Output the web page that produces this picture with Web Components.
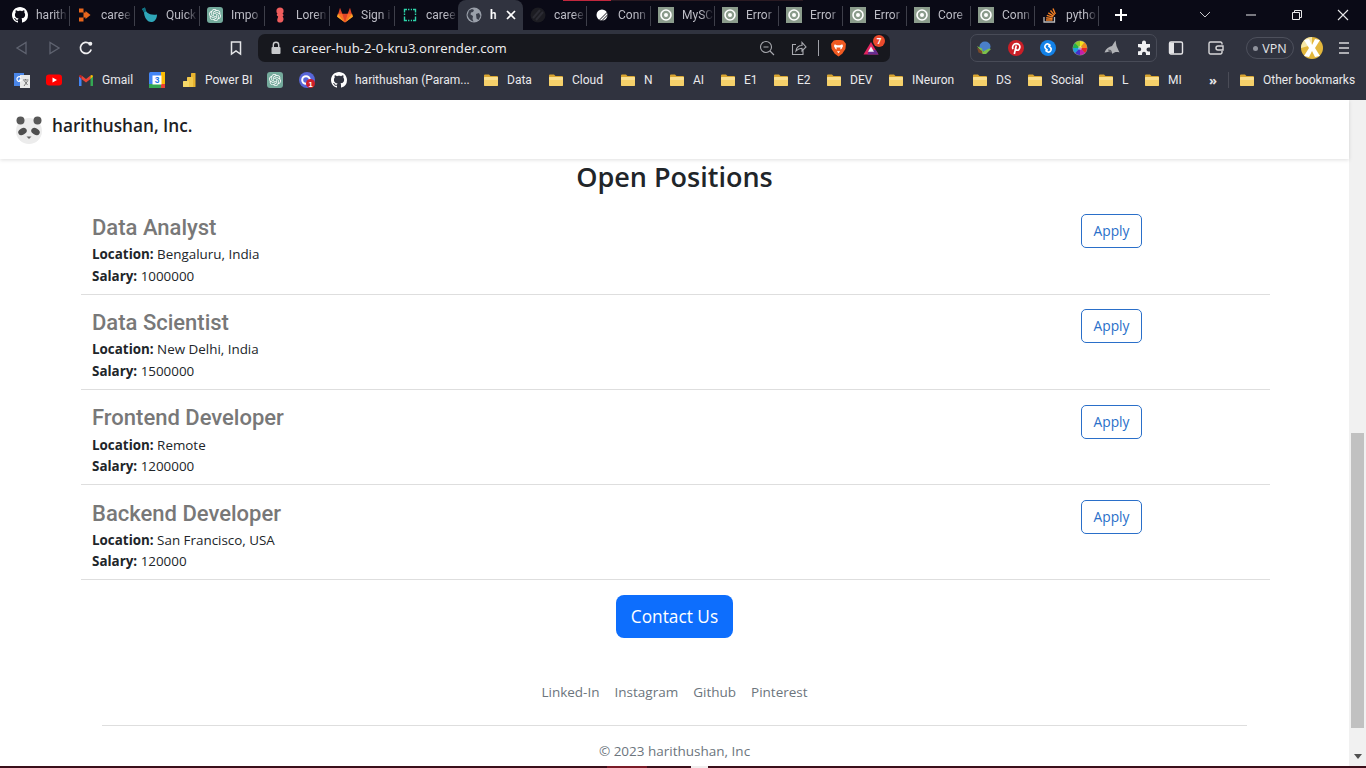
<!DOCTYPE html>
<html lang="en">
<head>
<meta charset="utf-8">
<title>Career Hub</title>
<style>
  html, body { margin: 0; padding: 0; height: 768px; overflow: hidden; background: #fff; }
  body { font-family: "Open Sans", "Noto Sans", "Liberation Sans", sans-serif; display: flex; flex-direction: column; }
</style>
</head>
<body>

<browser-chrome></browser-chrome>

<page-frame>
  <site-navbar brand="harithushan, Inc."></site-navbar>
  <section-heading>Open Positions</section-heading>
  <job-list>
    <job-row title="Data Analyst" location="Bengaluru, India" salary="1000000"></job-row>
    <job-row title="Data Scientist" location="New Delhi, India" salary="1500000"></job-row>
    <job-row title="Frontend Developer" location="Remote" salary="1200000"></job-row>
    <job-row title="Backend Developer" location="San Francisco, USA" salary="120000"></job-row>
  </job-list>
  <contact-button>Contact Us</contact-button>
  <site-footer></site-footer>
</page-frame>

<loading-strip></loading-strip>

<script>
  const ghPath = "M8 0C3.58 0 0 3.58 0 8c0 3.54 2.29 6.53 5.47 7.59.4.07.55-.17.55-.38 0-.19-.01-.82-.01-1.49-2.01.37-2.53-.49-2.69-.94-.09-.23-.48-.94-.82-1.13-.28-.15-.68-.52-.01-.53.63-.01 1.08.58 1.23.82.72 1.21 1.87.87 2.33.66.07-.52.28-.87.51-1.07-1.78-.2-3.64-.89-3.64-3.95 0-.87.31-1.59.82-2.15-.08-.2-.36-1.02.08-2.12 0 0 .67-.21 2.2.82.64-.18 1.32-.27 2-.27.68 0 1.36.09 2 .27 1.53-1.04 2.2-.82 2.2-.82.44 1.1.16 1.92.08 2.12.51.56.82 1.27.82 2.15 0 3.07-1.87 3.75-3.65 3.95.29.25.54.73.54 1.48 0 1.07-.01 1.93-.01 2.2 0 .21.15.46.55.38A8.013 8.013 0 0016 8c0-4.42-3.58-8-8-8z";
  const gptPath = "M22.2819 9.8211a5.9847 5.9847 0 0 0-.5157-4.9108 6.0462 6.0462 0 0 0-6.5098-2.9A6.0651 6.0651 0 0 0 4.9807 4.1818a5.9847 5.9847 0 0 0-3.9977 2.9 6.0462 6.0462 0 0 0 .7427 7.0966 5.98 5.98 0 0 0 .511 4.9107 6.051 6.051 0 0 0 6.5146 2.9001A5.9847 5.9847 0 0 0 13.2599 24a6.0557 6.0557 0 0 0 5.7718-4.2058 5.9894 5.9894 0 0 0 3.9977-2.9001 6.0557 6.0557 0 0 0-.7475-7.0729zm-9.022 12.6081a4.4755 4.4755 0 0 1-2.8764-1.0408l.1419-.0804 4.7783-2.7582a.7948.7948 0 0 0 .3927-.6813v-6.7369l2.02 1.1686a.071.071 0 0 1 .038.052v5.5826a4.504 4.504 0 0 1-4.4945 4.4944zm-9.6607-4.1254a4.4708 4.4708 0 0 1-.5346-3.0137l.142.0852 4.783 2.7582a.7712.7712 0 0 0 .7806 0l5.8428-3.3685v2.3324a.0804.0804 0 0 1-.0332.0615L9.74 19.9502a4.4992 4.4992 0 0 1-6.1408-1.6464zM2.3408 7.8956a4.485 4.485 0 0 1 2.3655-1.9728V11.6a.7664.7664 0 0 0 .3879.6765l5.8144 3.3543-2.0201 1.1685a.0757.0757 0 0 1-.071 0l-4.8303-2.7865A4.504 4.504 0 0 1 2.3408 7.872zm16.5963 3.8558L13.1038 8.364 15.1192 7.2a.0757.0757 0 0 1 .071 0l4.8303 2.7913a4.4944 4.4944 0 0 1-.6765 8.1042v-5.6772a.79.79 0 0 0-.407-.667zm2.0107-3.0231l-.142-.0852-4.7735-2.7818a.7759.7759 0 0 0-.7854 0L9.409 9.2297V6.8974a.0662.0662 0 0 1 .0284-.0615l4.8303-2.7866a4.4992 4.4992 0 0 1 6.6802 4.66zM8.3065 12.863l-2.02-1.1638a.0804.0804 0 0 1-.038-.0567V6.0742a4.4992 4.4992 0 0 1 7.3757-3.4537l-.142.0805L8.704 5.459a.7948.7948 0 0 0-.3927.6813zm1.0976-2.3654l2.602-1.4998 2.6069 1.4998v2.9994l-2.5974 1.4997-2.6067-1.4997Z";

  const svg16 = (body) => `<svg width="16" height="16" viewBox="0 0 16 16" aria-hidden="true">${body}</svg>`;

  // every favicon and toolbar glyph lives here
  const icons = {
    github: svg16(`<path fill="#fff" d="${ghPath}"/>`),
    render: svg16(`<path fill="#e8661c" d="M2 1.500h4.500v4H2zM2 10.500h4.500v4H2zM6.500 5.500h2V4l5 4-5 4v-1.500h-2z"/>`),
    quick: svg16(`<path fill="#2fa6b8" d="M0 2l3-1.500c.5 5 4 8 12 7 0 4-2 7-5 7.500-5 .5-8-5-8-10z"/><path fill="#0e6f80" d="M0 2l3-1.500 1 4-2 1z"/>`),
    openai: svg16(`<rect width="16" height="16" rx="3" fill="#74aa9c"/><g transform="translate(2 2) scale(.5)"><path fill="#fff" d="${gptPath}"/></g>`),
    lorem: svg16(`<circle cx="8" cy="4" r="3.600" fill="#ef5d5d"/><path fill="#ef5d5d" d="M5 7h6c1 1 .5 2-.4 2.600.9 1.300 1.400 2.600.4 4.400-1 2-5 2-5.600.3C4.700 12.600 6 10.500 6.200 9.500 5 9 4.400 8 5 7z"/>`),
    gitlab: svg16(`<path fill="#e24329" d="M8 15.500L.4 9.700 3 .8l2.300 6h5.400l2.300-6 2.600 8.900z"/><path fill="#fc6d26" d="M8 15.500L5.300 6.800H.9zM8 15.500l2.700-8.700h4.400z"/><path fill="#fca326" d="M.9 6.800L.1 9.300c-.1.300 0 .6.300.8L8 15.500zM15.100 6.800l.8 2.500c.1.300 0 .6-.3.8L8 15.500z"/>`),
    railway: svg16(`<g fill="none" stroke="#2dd4aa" stroke-width="1.400"><path d="M5 2.500H2.500v3M11 2.500h2.500v3M2.500 9.500v4H5M13.500 9.500v4H11"/><path stroke-dasharray="1.400 1.400" d="M6 2.500h4M6 13.500h4M2.500 6.500v2M13.500 6.500v2"/></g>`),
    globe: svg16(`<circle cx="8" cy="8" r="7.500" fill="#9aa0aa"/><path fill="#3a3e4a" d="M3 3.500l3-1.500 2 1-1 2-2 .5-.500 2L7 9l-.5 3 1 2.500C5 14 2 11 1.500 8zM10 7l3-1 1.500 3-2 4-2-1.500z"/>`),
    dark: svg16(`<circle cx="8" cy="8" r="7.500" fill="#1c1c22"/><path stroke="#2c2c34" stroke-width="2" d="M3 11l7-8M6 13l7-8"/>`),
    plane: svg16(`<circle cx="8" cy="8" r="5.500" fill="#fff"/><path stroke="#16161e" stroke-width="1" d="M5 13.500L13.500 5M7.500 14L14 7.500"/>`),
    ring: svg16(`<rect width="16" height="16" fill="#8b9c8c"/><circle cx="8" cy="8" r="5" fill="none" stroke="#fff" stroke-width="1.600"/><circle cx="8" cy="8" r="2" fill="#fff"/>`),
    stack: svg16(`<path fill="none" stroke="#bcbbbb" stroke-width="1.300" d="M2 10v5h10.500v-5"/><path stroke="#f48024" stroke-width="1.400" d="M4 13h6.500M4.200 10.800l6.400.8M4.800 8.300l6 1.900M6.300 5.800l5.300 3.300M8.500 3.500l4 4.600M11 1.500l2.300 5.600"/>`),
    back: svg16(`<path fill="none" stroke="#5f6370" stroke-width="1.300" d="M12 2.500v11L3 8z"/>`),
    forward: svg16(`<path fill="none" stroke="#5f6370" stroke-width="1.300" d="M4 2.500v11L13 8z"/>`),
    reload: svg16(`<path fill="none" stroke="#f0f0f2" stroke-width="1.700" d="M13.200 9.500A5.500 5.500 0 1 1 11.500 3.700"/><circle cx="12.300" cy="3.800" r="2" fill="#f0f0f2"/>`),
    bookmark: svg16(`<path fill="none" stroke="#e4e5e8" stroke-width="1.500" d="M3.500 2h9v12L8 10.800 3.500 14z"/>`),
    lock: `<svg width="12" height="14" viewBox="0 0 12 14" aria-hidden="true"><path fill="none" stroke="#c8c9cc" stroke-width="1.400" d="M3.300 6V4a2.700 2.700 0 0 1 5.400 0v2"/><rect x="1.500" y="6" width="9" height="7" rx="1" fill="#c8c9cc"/></svg>`,
    zoomOut: svg16(`<circle cx="7" cy="7" r="5.500" fill="none" stroke="#a9aab0" stroke-width="1.100"/><path stroke="#a9aab0" stroke-width="1.100" d="M11 11l4 4M4.500 7h5"/>`),
    share: svg16(`<path fill="none" stroke="#a9aab0" stroke-width="1.100" d="M5 4.500H1.500V14.500H12V10M5 11c.5-3.500 3-5.500 6-5.500V2.500l4 4.500-4 4V8.300c-2.500 0-4.500 1-6 2.700z"/>`),
    brave: `<svg width="17" height="18" viewBox="0 0 16 16" aria-hidden="true"><path fill="#f15a22" d="M3.500 1L6 .5h4l2.500.5L15 4l-.5 5-3 4.500L8 16l-3.500-2.500L1.500 9 1 4z"/><path fill="#fff" d="M4.500 4.500l2 .8h3l2-.8.8 1.500-1.500 3-1.300.5.500-2H6l.5 2-1.300-.5L3.700 6zM6.500 11h3L8 13z"/></svg>`,
    bat: svg16(`<path fill="#e0245e" d="M8 2l7.500 12.500H.500z"/><path fill="#662d91" d="M4.500 14.500H15.500L12.800 10H6z"/><path fill="#f4f4f8" d="M8 6.500L11 11.800H5z"/>`),
    idm: svg16(`<ellipse cx="9" cy="6.500" rx="5.500" ry="5" fill="#4a7fc9"/><path fill="#7cc04b" d="M1 6l5 2.500 1 3 6-3 2 .5-5 5H6.500z"/><path fill="#7c4a2a" d="M1 7.500l5 3.500 .5 3-4-1.500z"/>`),
    pinterest: svg16(`<circle cx="8" cy="8" r="8" fill="#cb1f27"/><path fill="none" stroke="#fff" stroke-width="1.700" d="M5 9.200C3.800 6.400 5.600 3.700 8.300 3.700c2.400 0 3.800 1.600 3.600 3.500-.2 2-1.600 3.300-3 3-1-.2-1.300-1-1.100-1.800M8.300 5.500L6.300 14"/>`),
    shazam: svg16(`<circle cx="8" cy="8" r="8" fill="#1382e8"/><path fill="none" stroke="#fff" stroke-width="1.700" stroke-linecap="round" d="M10 5.200L8.500 4.200C7.200 3.600 6 4.200 5.200 5.400 4.500 6.600 4.700 7.700 5.500 8.400L7.200 9.800M6 10.800l1.500 1c1.300.6 2.500 0 3.300-1.200.7-1.200.5-2.300-.3-3L8.800 6.200"/>`),
    wheel: svg16(`<circle cx="8" cy="8" r="7.500" fill="#888"/><path fill="#f5e11d" d="M8 8V1a7 7 0 0 1 4.500 1.500z"/><path fill="#f08a1d" d="M8 8l4.500-5.500A7 7 0 0 1 15 8z"/><path fill="#e8262a" d="M8 8h7a7 7 0 0 1-2 5z"/><path fill="#c520a8" d="M8 8l5 5a7 7 0 0 1-5 2z"/><path fill="#4430c8" d="M8 8v7a7 7 0 0 1-5-2z"/><path fill="#1ea0e0" d="M8 8l-5 5a7 7 0 0 1-2-5z"/><path fill="#24b34b" d="M8 8H1a7 7 0 0 1 2-5z"/><path fill="#8ecb2a" d="M8 8L3 3a7 7 0 0 1 5-2z"/><circle cx="8" cy="8" r="2" fill="#fff" opacity=".4"/>`),
    shark: svg16(`<path fill="#b0b2b6" d="M.5 12.500C2 8.500 5 6.500 8 6l3.500-5.500L12.500 6l3 6.500c-3-1-5-.5-7 1.500l-1-2.500c-2.500 0-4 .5-7 1z"/><path fill="#5b5d64" d="M4 9.500l3 .5 1 3-3-1z"/>`),
    puzzle: svg16(`<path fill="#f0f0f2" d="M6 2.500a2 2 0 0 1 4 0V4h4v3.500h-1.500a2 2 0 0 0 0 4H14V15h-4v-1.200a2 2 0 0 0-4 0V15H2v-3.800h1.200a2 2 0 0 0 0-4H2V4h4z"/>`),
    sidebar: svg16(`<rect x="1.500" y="2" width="13" height="12" rx="1.500" fill="none" stroke="#e6e6e8" stroke-width="1.400"/><rect x="2" y="2.500" width="4" height="11" fill="#e6e6e8"/>`),
    wallet: svg16(`<path fill="none" stroke="#d8d8da" stroke-width="1.400" d="M14 4.500V3.500a1.500 1.500 0 0 0-1.500-1.500H2.500A1.500 1.500 0 0 0 1 3.500v9A1.500 1.500 0 0 0 2.500 14h10a1.500 1.500 0 0 0 1.500-1.500V11"/><path fill="none" stroke="#d8d8da" stroke-width="1.400" d="M15 6H10a2 2 0 0 0 0 4h5z"/>`),
    avatar: `<svg width="22" height="22" viewBox="0 0 22 22" aria-hidden="true"><circle cx="11" cy="11" r="11" fill="#e3b73c"/><path fill="#f6e7a8" d="M0 11a11 11 0 0 1 11-11v8z"/><path fill="#fff" d="M3 3l5-1 3 6 3-6 5 1-5 8 5 8-5 1-3-6-3 6-5-1 5-8z"/></svg>`,
    menu: svg16(`<path stroke="#d8d9dc" stroke-width="1.600" d="M3 3h10M3 8h10M3 13h10"/>`),
    translate: svg16(`<rect x="0" y="1" width="10" height="13" fill="#4a86e8"/><rect x="6" y="3" width="10" height="13" fill="#e8e8e8"/><path fill="none" stroke="#fff" stroke-width="1.200" d="M7 5.500a2.300 2.300 0 1 0 .3 2.500H5"/><path stroke="#777" d="M9 8h5.500M11.500 7v1M10 14l3.500-5M10.500 9l3 4"/>`),
    youtube: svg16(`<rect x="0" y="2.500" width="16" height="11" rx="3" fill="#f00"/><path fill="#fff" d="M6.500 5.500v5L11 8z"/>`),
    gmail: svg16(`<path fill="#4285f4" d="M1 14V4.500L3.500 5v9z"/><path fill="#34a853" d="M12.500 14V5l2.500-.5V14z"/><path fill="#ea4335" d="M3.500 7V3.500L8 7l4.500-3.500V7L8 10.500z"/><path fill="#c5221f" d="M1 4.500C1 3 2.500 2.500 3.500 3.500V7z"/><path fill="#fbbc04" d="M15 4.500C15 3 13.500 2.500 12.500 3.500V7z"/>`),
    calendar: svg16(`<rect width="16" height="16" rx="1.500" fill="#4285f4"/><rect x="12" y="0" width="4" height="12" fill="#fbbc04"/><rect x="0" y="12" width="12" height="4" fill="#34a853"/><rect x="12" y="12" width="4" height="4" fill="#ea4335"/><rect x="3.500" y="3.500" width="9" height="9" fill="#fff"/><text x="8" y="11" text-anchor="middle" font-size="8.500" font-weight="700" fill="#1a73e8" font-family="Liberation Sans">3</text>`),
    powerbi: svg16(`<rect x="10" y="1" width="4.500" height="14" rx=".6" fill="#e8b32e"/><rect x="6" y="5" width="6" height="10" rx=".6" fill="#f2c94c"/><rect x="2" y="9" width="6" height="6" rx=".6" fill="#f6d968"/>`),
    circle: svg16(`<circle cx="8" cy="8" r="8" fill="#5866d8"/><circle cx="7" cy="8" r="3.800" fill="none" stroke="#fff" stroke-width="2"/><circle cx="11.500" cy="11.500" r="4.500" fill="#d01f2a"/><text x="11.500" y="14.500" text-anchor="middle" font-size="7.500" font-weight="700" fill="#fff" font-family="Liberation Sans">1</text>`),
    folder: svg16(`<path fill="#d9a531" d="M1 3.500A1 1 0 0 1 2 2.500h4L7.500 4H14a1 1 0 0 1 1 1v8a1 1 0 0 1-1 1H2a1 1 0 0 1-1-1z"/><rect x="1" y="5" width="14" height="9" rx="1" fill="#f5d06a"/><rect x="1" y="5" width="14" height="3" rx="1" fill="#f9df8f"/>`)
  };

  class BrowserTab extends HTMLElement {
    connectedCallback() {
      const active = this.hasAttribute("active");
      const w = this.getAttribute("w") || 64;
      this.attachShadow({ mode: "open" }).innerHTML = `
        <style>
          :host { display: flex; align-items: center; width: ${w}px; height: 30px; box-sizing: border-box; position: relative; padding-left: 7px; flex: none; }
          :host([active]) { background: #30333f; border-radius: 8px 8px 0 0; padding-left: 8px; }
          :host(:not([active]))::after { content: ""; position: absolute; right: 0; top: 6px; height: 20px; width: 1px; background: #3e3f4a; }
          :host([nosep])::after { display: none; }
          svg { flex: none; display: block; }
          span { margin-left: 8px; width: ${active ? 8 : 31}px; overflow: hidden; white-space: nowrap; font-size: 12px; color: ${active ? "#fff" : "#bdbdc6"}; font-weight: ${active ? 700 : 400}; font-family: Roboto, "Open Sans", sans-serif;
                 -webkit-mask-image: linear-gradient(to right, #000 62%, rgba(0,0,0,.05)); mask-image: linear-gradient(to right, #000 62%, rgba(0,0,0,.05)); }
          b { margin-left: 7px; width: 12px; height: 12px; display: block; }
        </style>
        ${icons[this.getAttribute("icon")]}
        <span>${this.getAttribute("label")}</span>
        ${active ? `<b><svg width="12" height="12" viewBox="0 0 12 12"><path stroke="#fff" stroke-width="1.700" d="M2 2l8 8M10 2l-8 8"/></svg></b>` : ""}
      `;
    }
  }
  customElements.define("browser-tab", BrowserTab);

  class BookmarkItem extends HTMLElement {
    connectedCallback() {
      const w = this.getAttribute("w");
      this.attachShadow({ mode: "open" }).innerHTML = `
        <style>
          :host { display: flex; align-items: center; gap: 8px; flex: none; }
          svg { display: block; }
          span { width: ${w}px; white-space: nowrap; font-size: 12px; color: #e9e9ec; font-family: Roboto, "Open Sans", sans-serif; }
        </style>
        ${icons[this.getAttribute("icon")]}
        ${w ? `<span><slot></slot></span>` : ""}
      `;
    }
  }
  customElements.define("bookmark-item", BookmarkItem);

  const chromeTemplate = document.createElement("template");
  chromeTemplate.innerHTML = `
    <style>
      :host { display: block; height: 100px; background: #30333f; flex: none; font-family: "Open Sans", "Noto Sans", sans-serif; }
      .tabs { height: 30px; background: #0a0a16; display: flex; padding-left: 5px; position: relative; }
      .load { position: absolute; top: 0; left: 563px; width: 48px; height: 1px; background: #c2273d; }
      .load2 { position: absolute; top: 0; left: 611px; width: 192px; height: 1px; background: #2a1a22; }
      .new { width: 44px; display: flex; align-items: center; justify-content: center; }
      .win { margin-left: auto; display: flex; align-items: center; }
      .win div { display: flex; align-items: center; justify-content: center; }
      .bar { height: 36px; display: flex; align-items: center; }
      .btn { width: 32px; height: 28px; display: flex; align-items: center; justify-content: center; flex: none; }
      .addr { width: 632px; height: 28px; margin-left: 6px; background: #17181e; border-radius: 7px; display: flex; align-items: center; flex: none; }
      .addr .url { margin-left: 10px; font-size: 13.200px; color: #eeeef0; white-space: nowrap; }
      .addr svg { display: block; flex: none; }
      .right { margin-left: auto; display: flex; align-items: center; margin-right: 11px; position: relative; }
      .divider { width: 1px; height: 16px; background: #a0a1a8; margin: 0 11px; }
      .badge { position: absolute; right: -6px; top: -4px; width: 12px; height: 12px; border-radius: 50%; background: #ea4a2c; color: #fff; font-size: 8px; font-weight: 700; line-height: 12px; text-align: center; }
      .ext { margin-left: 80px; width: 187px; height: 28px; box-sizing: border-box; border: 1px solid #484b57; border-radius: 7px; display: flex; align-items: center; flex: none; }
      .ext .btn:first-child { margin-left: -3px; }
      .vpn { width: 48px; height: 22px; box-sizing: border-box; border: 1px solid #4d505c; border-radius: 11px; margin-left: 14px; display: flex; align-items: center; justify-content: center; gap: 4px; font-size: 12.500px; color: #e4e5e8; flex: none; }
      .vpn i { width: 5px; height: 5px; border-radius: 50%; background: #8f929c; }
      .av { margin-left: 7px; width: 22px; height: 22px; flex: none; }
      .av svg { display: block; }
      .marks { height: 34px; display: flex; align-items: center; gap: 16px; padding-left: 14px; padding-bottom: 6px; box-sizing: border-box; }
      .chev { color: #e4e5e8; font-size: 13px; font-weight: 700; width: 12px; margin-left: 11px; letter-spacing: -1px; }
      .vline { width: 1px; height: 16px; background: #4a4c57; margin-left: -9px; margin-right: -6px; }
    </style>
    <div class="tabs">
      <browser-tab icon="github" label="harith" w="65"></browser-tab>
      <browser-tab icon="render" label="caree" w="65"></browser-tab>
      <browser-tab icon="quick" label="Quick" w="65"></browser-tab>
      <browser-tab icon="openai" label="Impo" w="65"></browser-tab>
      <browser-tab icon="lorem" label="Loren" w="65"></browser-tab>
      <browser-tab icon="gitlab" label="Sign i" w="65"></browser-tab>
      <browser-tab icon="railway" label="caree" w="63" nosep></browser-tab>
      <browser-tab icon="globe" label="h" w="65" active></browser-tab>
      <browser-tab icon="dark" label="caree"></browser-tab>
      <browser-tab icon="plane" label="Conn"></browser-tab>
      <browser-tab icon="ring" label="MySC"></browser-tab>
      <browser-tab icon="ring" label="Error"></browser-tab>
      <browser-tab icon="ring" label="Error"></browser-tab>
      <browser-tab icon="ring" label="Error"></browser-tab>
      <browser-tab icon="ring" label="Core"></browser-tab>
      <browser-tab icon="ring" label="Conn"></browser-tab>
      <browser-tab icon="stack" label="pytho"></browser-tab>
      <div class="new"><svg width="14" height="14" viewBox="0 0 14 14"><path stroke="#fff" stroke-width="2" d="M7 1v12M1 7h12"/></svg></div>
      <div class="win">
        <div style="width:46px"><svg width="12" height="8" viewBox="0 0 12 8"><path fill="none" stroke="#c8c8cc" d="M1 1l5 5 5-5"/></svg></div>
        <div style="width:46px"><svg width="12" height="2" viewBox="0 0 12 2"><path stroke="#e8e8ea" d="M1 1h10"/></svg></div>
        <div style="width:46px"><svg width="12" height="12" viewBox="0 0 12 12"><path fill="none" stroke="#e8e8ea" d="M1.500 3.500h7v7h-7zM3.500 3.500v-2h7v7h-2"/></svg></div>
        <div style="width:46px"><svg width="12" height="12" viewBox="0 0 12 12"><path stroke="#e8e8ea" stroke-width="1.100" d="M1 1l10 10M11 1L1 11"/></svg></div>
      </div>
      <div class="load"></div><div class="load2"></div>
    </div>
    <div class="bar">
      <div class="btn" style="margin-left:6px">${icons.back}</div>
      <div class="btn">${icons.forward}</div>
      <div class="btn">${icons.reload}</div>
      <div class="btn" style="margin-left:118px">${icons.bookmark}</div>
      <div class="addr">
        <span style="margin-left:12px;display:flex">${icons.lock}</span>
        <span class="url">career-hub-2-0-kru3.onrender.com</span>
        <div class="right">
          ${icons.zoomOut}
          <span style="width:16px"></span>
          ${icons.share}
          <span class="divider"></span>
          ${icons.brave}
          <span style="width:16px"></span>
          ${icons.bat}
          <span class="badge">7</span>
        </div>
      </div>
      <div class="ext">
        <div class="btn">${icons.idm}</div>
        <div class="btn">${icons.pinterest}</div>
        <div class="btn">${icons.shazam}</div>
        <div class="btn">${icons.wheel}</div>
        <div class="btn">${icons.shark}</div>
        <div class="btn">${icons.puzzle}</div>
      </div>
      <div class="btn" style="margin-left:3px">${icons.sidebar}</div>
      <div class="btn" style="margin-left:8px">${icons.wallet}</div>
      <div class="vpn"><i></i>VPN</div>
      <div class="av">${icons.avatar}</div>
      <div class="btn" style="margin-left:5px">${icons.menu}</div>
    </div>
    <div class="marks">
      <bookmark-item icon="translate"></bookmark-item>
      <bookmark-item icon="youtube"></bookmark-item>
      <bookmark-item icon="gmail" w="31">Gmail</bookmark-item>
      <bookmark-item icon="calendar"></bookmark-item>
      <bookmark-item icon="powerbi" w="46">Power BI</bookmark-item>
      <bookmark-item icon="openai"></bookmark-item>
      <bookmark-item icon="circle"></bookmark-item>
      <bookmark-item icon="github" w="112">harithushan (Param...</bookmark-item>
      <bookmark-item icon="folder" w="25">Data</bookmark-item>
      <bookmark-item icon="folder" w="32">Cloud</bookmark-item>
      <bookmark-item icon="folder" w="9">N</bookmark-item>
      <bookmark-item icon="folder" w="11">AI</bookmark-item>
      <bookmark-item icon="folder" w="13">E1</bookmark-item>
      <bookmark-item icon="folder" w="13">E2</bookmark-item>
      <bookmark-item icon="folder" w="22">DEV</bookmark-item>
      <bookmark-item icon="folder" w="44">INeuron</bookmark-item>
      <bookmark-item icon="folder" w="15">DS</bookmark-item>
      <bookmark-item icon="folder" w="31">Social</bookmark-item>
      <bookmark-item icon="folder" w="6">L</bookmark-item>
      <bookmark-item icon="folder" w="14">MI</bookmark-item>
      <span class="chev">»</span>
      <span class="vline"></span>
      <bookmark-item icon="folder" w="96">Other bookmarks</bookmark-item>
    </div>
  `;
  class BrowserChrome extends HTMLElement {
    connectedCallback() {
      this.attachShadow({ mode: "open" }).appendChild(chromeTemplate.content.cloneNode(true));
    }
  }
  customElements.define("browser-chrome", BrowserChrome);

  class PageFrame extends HTMLElement {
    constructor() {
      super();
      this.attachShadow({ mode: "open" }).innerHTML = `
        <style>
          :host { display: flex; height: 666px; flex: none; overflow: hidden; color: #212529; }
          .view { width: 1349px; flex: none; display: flex; flex-direction: column; }
          .track { width: 17px; flex: none; background: #f1f1f1; display: flex; flex-direction: column; align-items: center; }
          .thumb { width: 13px; height: 295px; margin-top: 333px; background: #c1c1c1; }
          .arrow { margin-top: auto; margin-bottom: 7px; width: 0; height: 0; border-left: 4px solid transparent; border-right: 4px solid transparent; border-top: 5px solid #505050; }
        </style>
        <div class="view"><slot></slot></div>
        <div class="track"><div class="thumb"></div><div class="arrow"></div></div>
      `;
    }
  }
  customElements.define("page-frame", PageFrame);

  class SiteNavbar extends HTMLElement {
    connectedCallback() {
      this.attachShadow({ mode: "open" }).innerHTML = `
        <style>
          :host { display: flex; align-items: center; height: 59px; flex: none; padding-left: 15px; gap: 9px; background: #fff; box-shadow: 0 1px 4px rgba(0,0,0,.13); position: relative; z-index: 1; }
          svg { display: block; margin-top: 1px; }
          span { font-size: 17.200px; font-weight: 600; color: #1d2024; padding-bottom: 9px; }
        </style>
        <svg width="28" height="30" viewBox="0 0 28 30" aria-hidden="true">
          <circle cx="14" cy="16" r="13" fill="#ececec"/>
          <circle cx="5.500" cy="5.500" r="4" fill="#585858"/>
          <circle cx="22.500" cy="5.500" r="4" fill="#585858"/>
          <ellipse cx="7.500" cy="16.500" rx="4.500" ry="3.200" fill="#4e4e4e" transform="rotate(-30 7.500 16.500)"/>
          <ellipse cx="20.500" cy="16.500" rx="4.500" ry="3.200" fill="#4e4e4e" transform="rotate(30 20.500 16.500)"/>
          <path d="M11.500 21.500h5L14 24z" fill="#666"/>
        </svg>
        <span>${this.getAttribute("brand")}</span>
      `;
    }
  }
  customElements.define("site-navbar", SiteNavbar);

  class SectionHeading extends HTMLElement {
    constructor() {
      super();
      this.attachShadow({ mode: "open" }).innerHTML = `
        <style>
          :host { display: block; flex: none; height: 40.400px; text-align: center; font-size: 27px; font-weight: 600; line-height: 36px; color: #212529; }
        </style>
        <slot></slot>
      `;
    }
  }
  customElements.define("section-heading", SectionHeading);

  class JobList extends HTMLElement {
    constructor() {
      super();
      this.attachShadow({ mode: "open" }).innerHTML = `
        <style>:host { display: block; flex: none; width: 1189px; margin-left: 81px; }</style>
        <slot></slot>
      `;
    }
  }
  customElements.define("job-list", JobList);

  class JobRow extends HTMLElement {
    connectedCallback() {
      this.attachShadow({ mode: "open" }).innerHTML = `
        <style>
          :host { display: grid; grid-template-columns: 1000px 189px; height: 95.200px; box-sizing: border-box; border-bottom: 1px solid #dedede; padding-top: 12.600px; }
          .info { padding-left: 11px; }
          h4 { margin: 0 0 1.500px; padding-top: 2px; font: 500 22px/28.800px Roboto, "Open Sans", sans-serif; color: #787878; }
          p { margin: 0; font-size: 13.400px; line-height: 21.600px; color: #212529; }
          b { font-weight: 700; }
          button { display: block; margin-top: 2.200px; width: 61px; height: 34px; padding: 0 0 1px; background: #fff; border: 1px solid #2a6fc9; border-radius: 5px; color: #2a6fc9; font: 400 13.800px "Open Sans", "Noto Sans", sans-serif; }
        </style>
        <div class="info">
          <h4>${this.getAttribute("title")}</h4>
          <p><b>Location:</b> ${this.getAttribute("location")}</p>
          <p><b>Salary:</b> ${this.getAttribute("salary")}</p>
        </div>
        <div><button type="button">Apply</button></div>
      `;
    }
  }
  customElements.define("job-row", JobRow);

  class ContactButton extends HTMLElement {
    constructor() {
      super();
      this.attachShadow({ mode: "open" }).innerHTML = `
        <style>
          :host { display: flex; justify-content: center; flex: none; padding-top: 15px; }
          button { width: 117px; height: 43px; padding: 0; border: 0; border-radius: 8px; background: #0d6efd; color: #fff; font: 400 17.300px "Open Sans", "Noto Sans", sans-serif; }
        </style>
        <button type="button"><slot></slot></button>
      `;
    }
  }
  customElements.define("contact-button", ContactButton);

  class SiteFooter extends HTMLElement {
    constructor() {
      super();
      this.attachShadow({ mode: "open" }).innerHTML = `
        <style>
          :host { display: block; flex: none; color: #6c757d; font-size: 13.500px; }
          nav { display: flex; justify-content: center; gap: 15px; margin-top: 43px; line-height: 22px; }
          hr { width: 1145px; margin: 22px auto 0; border: 0; border-top: 1px solid #dedede; }
          p { margin: 14px 0 0; text-align: center; line-height: 22px; }
        </style>
        <nav><span>Linked-In</span><span>Instagram</span><span>Github</span><span>Pinterest</span></nav>
        <hr>
        <p>© 2023 harithushan, Inc</p>
      `;
    }
  }
  customElements.define("site-footer", SiteFooter);

  class LoadingStrip extends HTMLElement {
    constructor() {
      super();
      this.attachShadow({ mode: "open" }).innerHTML = `
        <style>
          :host { display: flex; height: 2px; flex: none; background: #3b0f1a; }
          .red { width: 40px; margin-left: 607px; background: #7a1c28; }
          .white { width: 17px; margin-left: 44px; background: #f0eeee; }
        </style>
        <div class="red"></div><div class="white"></div>
      `;
    }
  }
  customElements.define("loading-strip", LoadingStrip);
</script>
</body>
</html>
